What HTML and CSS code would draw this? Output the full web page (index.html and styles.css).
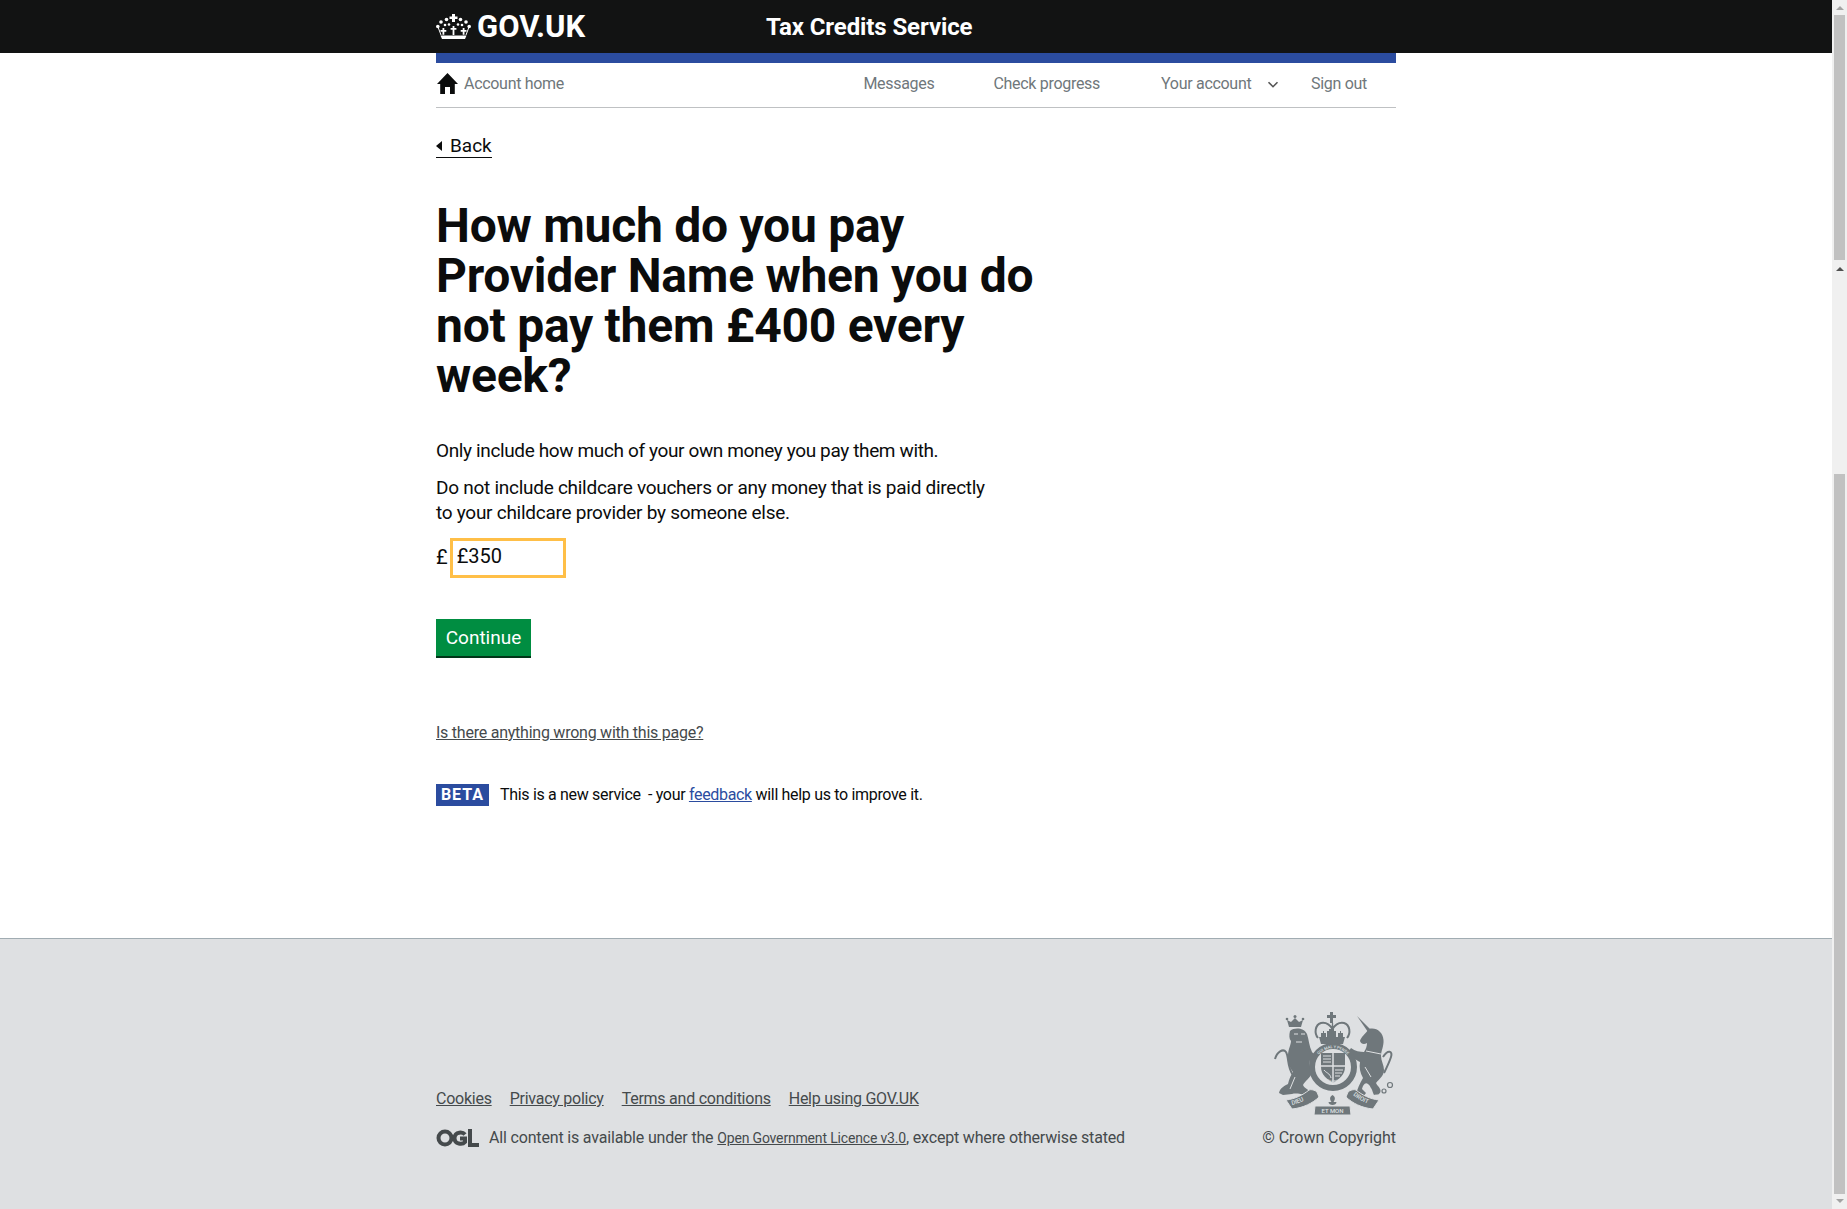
FILE: index.html

```html
<!DOCTYPE html>
<html lang="en">
  <head>
    <meta charset="UTF-8" />
    <title>How much do you pay Provider Name - Tax Credits Service</title>
    <link rel="stylesheet" href="styles.css">
  </head>

  <body>
    <div class="page">
      <header class="top-bar">
        <div class="wrap top-inner">
          <a class="logo" href="#">
            <svg class="crown" viewBox="0 0 35 25" width="35" height="25">
              <g fill="#fff">
                <path d="M4.500 21.500h26l-1.500 3.500H6z"/>
                <path d="M16 0h3v2.500h2.500v2.500H19v3h-3V5h-2.500V2.500H16z"/>
                <path d="M6.500 14h1.800v2h2v1.800h-2v3H6.500v-3h-2V16h2zM16.600 12h1.800v2h2v1.800h-2v5.200h-1.800v-5.200h-2V14h2zM26.700 14h1.800v2h2v1.800h-2v3h-1.800v-3h-2V16h2z"/>
                <circle cx="1.800" cy="12.500" r="1.800"/><circle cx="33.200" cy="12.500" r="1.800"/>
                <circle cx="5" cy="8" r="1.800"/><circle cx="30" cy="8" r="1.800"/>
                <circle cx="10.500" cy="5.500" r="1.800"/><circle cx="24.500" cy="5.500" r="1.800"/>
                <circle cx="13" cy="10.500" r="1.300"/><circle cx="22" cy="10.500" r="1.300"/>
                <circle cx="9" cy="11" r="1.300"/><circle cx="26" cy="11" r="1.300"/>
              </g>
              <path fill="none" stroke="#fff" stroke-width="1" d="M2 13l3 8M33 13l-3 8"/>
            </svg>
            GOV.UK
          </a>
          <span class="service-name">Tax Credits Service</span>
        </div>
      </header>

      <div class="wrap">
        <nav class="account-nav">
          <a class="home-link" href="#">
            <svg viewBox="0 0 21 21" width="21" height="21"><path fill="#0b0c0c" d="M10.500 0 21 11h-3.200v10h-4.800v-7H8v7H3.200V11H0z"/></svg>
            Account home
          </a>
          <ul class="nav-links">
            <li class="nav-messages"><a href="#">Messages</a></li>
            <li class="nav-progress"><a href="#">Check progress</a></li>
            <li class="nav-account"><a href="#">Your account</a>
              <svg viewBox="0 0 12 8" width="12" height="8"><path fill="none" stroke="#555" stroke-width="1.600" d="M1.500 1.200 6 5.700l4.500-4.500"/></svg>
            </li>
            <li class="nav-signout"><a href="#">Sign out</a></li>
          </ul>
        </nav>

        <main class="content">
          <a class="back-link" href="#">Back</a>
          <h1>How much do you pay Provider Name when you do not pay them £400 every week?</h1>
          <p class="hint">Only include how much of your own money you pay them with.</p>
          <p class="hint hint-wide">Do not include childcare vouchers or any money that is paid directly to your childcare provider by someone else.</p>
          <div class="amount">
            <span class="amount-sign">£</span>
            <input class="amount-input" type="text" value="£350" />
          </div>
          <button class="button" type="button">Continue</button>
          <a class="report" href="#">Is there anything wrong with this page?</a>
          <div class="beta">
            <strong class="beta-tag">BETA</strong>
            <span class="beta-text">This is a new service &nbsp;- your <a href="#">feedback</a> will help us to improve it.</span>
          </div>
        </main>
      </div>

      <footer class="footer">
        <div class="wrap footer-inner">
          <div class="footer-meta">
            <ul class="footer-links">
              <li><a href="#">Cookies</a></li>
              <li><a href="#">Privacy policy</a></li>
              <li><a href="#">Terms and conditions</a></li>
              <li><a href="#">Help using GOV.UK</a></li>
            </ul>
            <div class="licence">
              <svg class="ogl" viewBox="0 0 44 18" width="44" height="18">
                <circle cx="9" cy="9" r="6.500" fill="none" stroke="#454a4c" stroke-width="4"/>
                <path fill="none" stroke="#454a4c" stroke-width="4" d="M29 5.500C27 3 19 2 18.500 9c0 6.500 8 7 10.500 4V9.500h-5"/>
                <path fill="none" stroke="#454a4c" stroke-width="4" d="M34 0v16h9"/>
              </svg>
              <span>All content is available under the <a class="licence-link" href="#">Open Government Licence v3.0</a>, except where otherwise stated</span>
            </div>
          </div>
          <div class="copyright">
            <svg class="crest" viewBox="5 3 126 106" width="126" height="106">
              <defs>
                <path id="garter" d="M50 64a18.500 18.500 0 1 1 36 0"/>
                <path id="garter-low" d="M50 62a18.500 18.500 0 0 0 36 0"/>
                <path id="rib-l" d="M27 98C33 97 41 93 47 88"/>
                <path id="rib-r" d="M88 88C94 93 102 97 108 98"/>
              </defs>
              <g fill="#6f777b">
                <!-- lion -->
                <path d="M25 24C30 20 39 21 42 27C44 33 44 39 47 45L53 52 50 56 45 53C44 58 45 62 47 66C45 71 40 74 38 78C39 81 43 82 45 85L42 88C35 87 31 86 27 87L18 88 14 86C15 81 19 79 23 77C24 72 26 68 28 65C24 60 23 55 23 49C23 42 26 38 26 34C24 32 24 28 25 24z"/>
                <path d="M24 20 22 13l4 2 4-4 4 4 4-2-2 7z"/>
                <circle cx="22" cy="12" r="1.300"/><circle cx="30" cy="9.500" r="1.500"/><circle cx="38" cy="12" r="1.300"/>
                <!-- unicorn -->
                <path d="M92 9 106 23 103 25z"/>
                <path d="M104 22C111 20 118 25 118.500 33C119 39 116 44 116 49C116 54 119 58 119 63C119 69 114 72 111 76C113 80 117 82 115 86L109 88C107 84 107 80 103 77C100 75 98 78 97 82L101 86 98 90 91 88C92 82 95 76 98 71C95 66 94 60 95 55C91 53 86 50 84 44L86 41C90 44 95 45 99 45C101 42 102 39 102 36C99 38 96 37 95 34C96 30 100 27 104 22z"/>
                <path d="M54 30h26l-2 7H56z"/>
                <path d="M65 5h3v3h3v3h-3v5h-3v-5h-3V8h3z"/>
                <path d="M62 24h2v-2h2v-2h1v2h2v2h2v6h-9zM56 26h2v-2h1v2h2v4h-5zM73 26h2v-2h1v2h2v4h-5z"/>
              </g>
              <g fill="none" stroke="#6f777b">
                <path stroke-width="2" d="M10 52c2-7 8-11 11-7 3 5 1 15 7 23M118 50c5-8 10-6 8 0-2 6-4 10-7 16"/>
                <path stroke-width="2" d="M53 31c-4-5-3-13 3-15 5-1 9 2 11.500 6 2.500-4 6.500-7 11.500-6 6 2 7 10 3 15"/>
                <path stroke-width="1.300" d="M67.500 16v14"/>
                <circle stroke-width="1.200" cx="108" cy="79" r="2"/><circle stroke-width="1.200" cx="112" cy="85" r="2"/><circle stroke-width="1.200" cx="119" cy="84" r="2"/><circle stroke-width="1.200" cx="125" cy="78" r="2.500"/>
              </g>
              <circle cx="68" cy="60" r="23" fill="#dee0e2"/>
              <circle cx="68" cy="60" r="21" fill="none" stroke="#6f777b" stroke-width="6"/>
              <path fill="#6f777b" d="M56 46h24v14c0 8-6 12-12 16-6-4-12-8-12-16z"/>
              <path fill="none" stroke="#dee0e2" stroke-width="1.500" d="M68 46v30M56 59h24"/>
              <path fill="none" stroke="#dee0e2" stroke-width="1" d="M58 49h8M58 52h8M58 55h8M70 63h8M70 66h7M70 69h5M59 63c2 3 6 3 7 8"/>
              <path fill="none" stroke="#dee0e2" stroke-width="1" d="M101 44l15 3M29 27h4M36 27h4M31 35h6M30 70l-5 12M100 60l6 10"/>
              <!-- ribbons -->
              <g fill="#6f777b" stroke="#dee0e2" stroke-width="1">
                <path d="M21 93C30 92 38 88 44 83C46 82 50 83 52 85L54 90C48 96 38 101 27 102z"/>
                <path d="M114 93C105 92 97 88 91 83C89 82 85 83 83 85L81 90C87 96 97 101 108 102z"/>
                <path d="M50 99h35l1 9H49z"/>
              </g>
              <path fill="#6f777b" d="M67.500 88c3 2 3 4 1 7h3c0 2-2 3-4 3s-4-1-4-3h3c-2-3-2-5 1-7z"/>
              <g class="crest-text">
                <text class="crest-garter"><textPath href="#garter" startOffset="50%" text-anchor="middle">QUI MAL Y PENSE</textPath></text>
                <text class="crest-garter"><textPath href="#garter-low" startOffset="50%" text-anchor="middle">HONI SOIT</textPath></text>
                <text class="crest-motto"><textPath href="#rib-l">DIEU</textPath></text>
                <text class="crest-motto"><textPath href="#rib-r">DROIT</textPath></text>
                <text class="crest-motto" x="67.500" y="106" text-anchor="middle">ET MON</text>
              </g>
            </svg>
            <span>© Crown Copyright</span>
          </div>
        </div>
      </footer>
    </div>

    <div class="scrollbar">
      <span class="arrow arrow-up"></span>
      <span class="thumb thumb-top"></span>
      <span class="arrow arrow-up arrow-dark"></span>
      <span class="scroll-gap"></span>
      <span class="thumb thumb-main"></span>
      <span class="arrow arrow-down"></span>
    </div>
  </body>
</html>
```

FILE: styles.css

```css
html, body {
  margin: 0;
  height: 100%;
}
body {
  display: flex;
  height: 1209px;
  overflow: hidden;
  font-family: Roboto, 'Noto Sans', sans-serif;
  font-size: 19px;
  color: #0b0c0c;
  background: #fff;
}
a {
  color: inherit;
}
ul {
  list-style: none;
  margin: 0;
  padding: 0;
}
.page {
  width: 1832px;
  display: flex;
  flex-direction: column;
}
.wrap {
  width: 960px;
  margin: 0 auto;
}

/* black bar */
.top-bar {
  background: #121313;
  height: 53px;
  color: #fff;
}
.top-inner {
  display: flex;
  align-items: center;
  height: 53px;
}
.logo {
  display: flex;
  align-items: center;
  gap: 6px;
  width: 330px;
  color: #fff;
  text-decoration: none;
  font-weight: 700;
  font-size: 31px;
  flex-shrink: 0;
}
.service-name {
  font-weight: 700;
  font-size: 24px;
  letter-spacing: -0.1px;
}

/* account nav */
.account-nav {
  border-top: 10px solid #2b4c9f;
  border-bottom: 1px solid #bfc1c3;
  height: 41px;
  padding-bottom: 3px;
  display: flex;
  align-items: center;
  font-size: 16px;
  letter-spacing: -0.3px;
  color: #6f777b;
}
.account-nav a {
  text-decoration: none;
}
.home-link {
  display: flex;
  align-items: center;
  gap: 6px;
  padding-left: 1px;
}
.nav-links {
  display: flex;
  align-items: center;
  margin-left: auto;
  padding-right: 29px;
}
.nav-progress {
  margin-left: 59px;
}
.nav-account {
  margin-left: 61px;
}
.nav-account svg {
  margin-left: 12px;
}
.nav-signout {
  margin-left: 32px;
}

/* main */
.content {
  height: 830px;
  box-sizing: border-box;
  padding-top: 27px;
  display: flex;
  flex-direction: column;
  align-items: flex-start;
}
.back-link {
  text-decoration: none;
  border-bottom: 1px solid #0b0c0c;
  padding-left: 14px;
  line-height: 22px;
  height: 22px;
  position: relative;
}
.back-link::before {
  content: "";
  position: absolute;
  left: 0;
  top: 6px;
  border: 5px solid transparent;
  border-left-width: 0;
  border-right: 6px solid #0b0c0c;
}
h1 {
  font-size: 48px;
  line-height: 50px;
  font-weight: 700;
  letter-spacing: -0.25px;
  width: 630px;
  margin: 43px 0 37px;
}
.hint {
  margin: 0 0 12px;
  line-height: 25px;
  letter-spacing: -0.37px;
}
.hint-wide {
  width: 560px;
  letter-spacing: -0.27px;
}
.amount {
  display: flex;
  align-items: center;
  gap: 2px;
  margin-top: 1px;
}
.amount-sign {
  padding-bottom: 2px;
  font-size: 20px;
}
.amount-input {
  box-sizing: border-box;
  width: 116px;
  height: 40px;
  border: 3px solid #ffbf47;
  padding: 0 4px 4px;
  font-family: inherit;
  font-size: 20px;
  color: #0b0c0c;
  outline: none;
}
.button {
  margin-top: 41px;
  width: 95px;
  height: 39px;
  border: 0;
  border-bottom: 2px solid #003618;
  background: #008d41;
  color: #fff;
  font-family: inherit;
  font-size: 19px;
  padding: 0;
}
.report {
  margin-top: 65px;
  font-size: 16px;
  letter-spacing: -0.24px;
  line-height: 20px;
  color: #454a4c;
}
.beta {
  display: flex;
  align-items: center;
  margin-top: 41px;
  font-size: 16px;
  letter-spacing: -0.32px;
}
.beta a {
  color: #2b4c9f;
}
.beta-text {
  padding-bottom: 2px;
}
.beta-tag {
  background: #2b4c9f;
  color: #fff;
  width: 53px;
  height: 22px;
  line-height: 22px;
  text-align: center;
  letter-spacing: 1px;
  margin-right: 11px;
}

/* footer */
.footer {
  flex: 1;
  background: #dee0e2;
  border-top: 1px solid #a1acb2;
}
.footer-inner {
  display: flex;
  justify-content: space-between;
  align-items: flex-end;
  height: 208px;
  font-size: 16px;
  color: #454a4c;
}
.footer-links {
  display: flex;
  gap: 18px;
  margin-bottom: 20px;
  letter-spacing: -0.25px;
}
.licence {
  display: flex;
  align-items: center;
  gap: 9px;
  letter-spacing: -0.17px;
}
.licence-link {
  font-size: 14px;
}
.copyright {
  display: flex;
  flex-direction: column;
  align-items: flex-end;
  gap: 12px;
  letter-spacing: -0.05px;
}
.crest-text {
  fill: #dee0e2;
  font-weight: 500;
}
.crest-garter {
  font-size: 4px;
}
.crest-motto {
  font-size: 6px;
}

/* scrollbar strip */
.scrollbar {
  width: 15px;
  background: #f0f0f0;
  display: flex;
  flex-direction: column;
  align-items: center;
  padding-top: 6px;
  box-sizing: border-box;
}
.arrow {
  width: 0;
  height: 0;
  border-left: 4px solid transparent;
  border-right: 4px solid transparent;
  border-bottom: 4px solid #a3a3a3;
}
.arrow-dark {
  border-bottom-color: #505050;
  margin-top: 7px;
}
.arrow-down {
  border-bottom: 0;
  border-top: 4px solid #a3a3a3;
  margin-top: 5px;
}
.thumb {
  width: 11px;
  background: #c1c1c1;
}
.thumb-top {
  height: 245px;
  margin-top: 5px;
}
.scroll-gap {
  height: 203px;
}
.thumb-main {
  height: 720px;
}
```
